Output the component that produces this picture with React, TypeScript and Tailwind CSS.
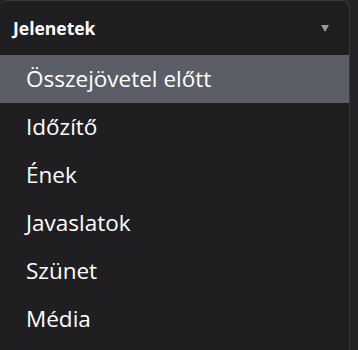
import React from 'react';

const items = ['Összejövetel előtt', 'Időzítő', 'Ének', 'Javaslatok', 'Szünet', 'Média'];

export default function App() {
  const [selected, setSelected] = React.useState(0);

  return (
    <div className="h-[350px] w-[358px] overflow-hidden bg-[#242426]" style={{ fontFamily: '"Open Sans", "Noto Sans", sans-serif' }}>
      <div className="h-[360px] w-[350px] rounded-t-lg border border-b-0 border-l-0 border-[#3a3a3d] bg-[#1f1f21]">
        <div className="flex h-[54px] items-center justify-between pl-[13px] pr-[20px]">
          <span className="text-[17.5px] font-bold text-white">Jelenetek</span>
          <svg width="8" height="7" viewBox="0 0 8 7" className="text-[#9a9a9c]">
            <path d="M0 0h8L4 7z" fill="currentColor" />
          </svg>
        </div>
        <ul className="flex flex-col">
          {items.map((item, i) => (
            <li
              key={item}
              onClick={() => setSelected(i)}
              className={`flex h-12 cursor-pointer items-center pl-[26px] text-[22.5px] text-white ${
                i === selected ? 'bg-[#5b5e66]' : ''
              }`}
            >
              {item}
            </li>
          ))}
        </ul>
      </div>
    </div>
  );
}
